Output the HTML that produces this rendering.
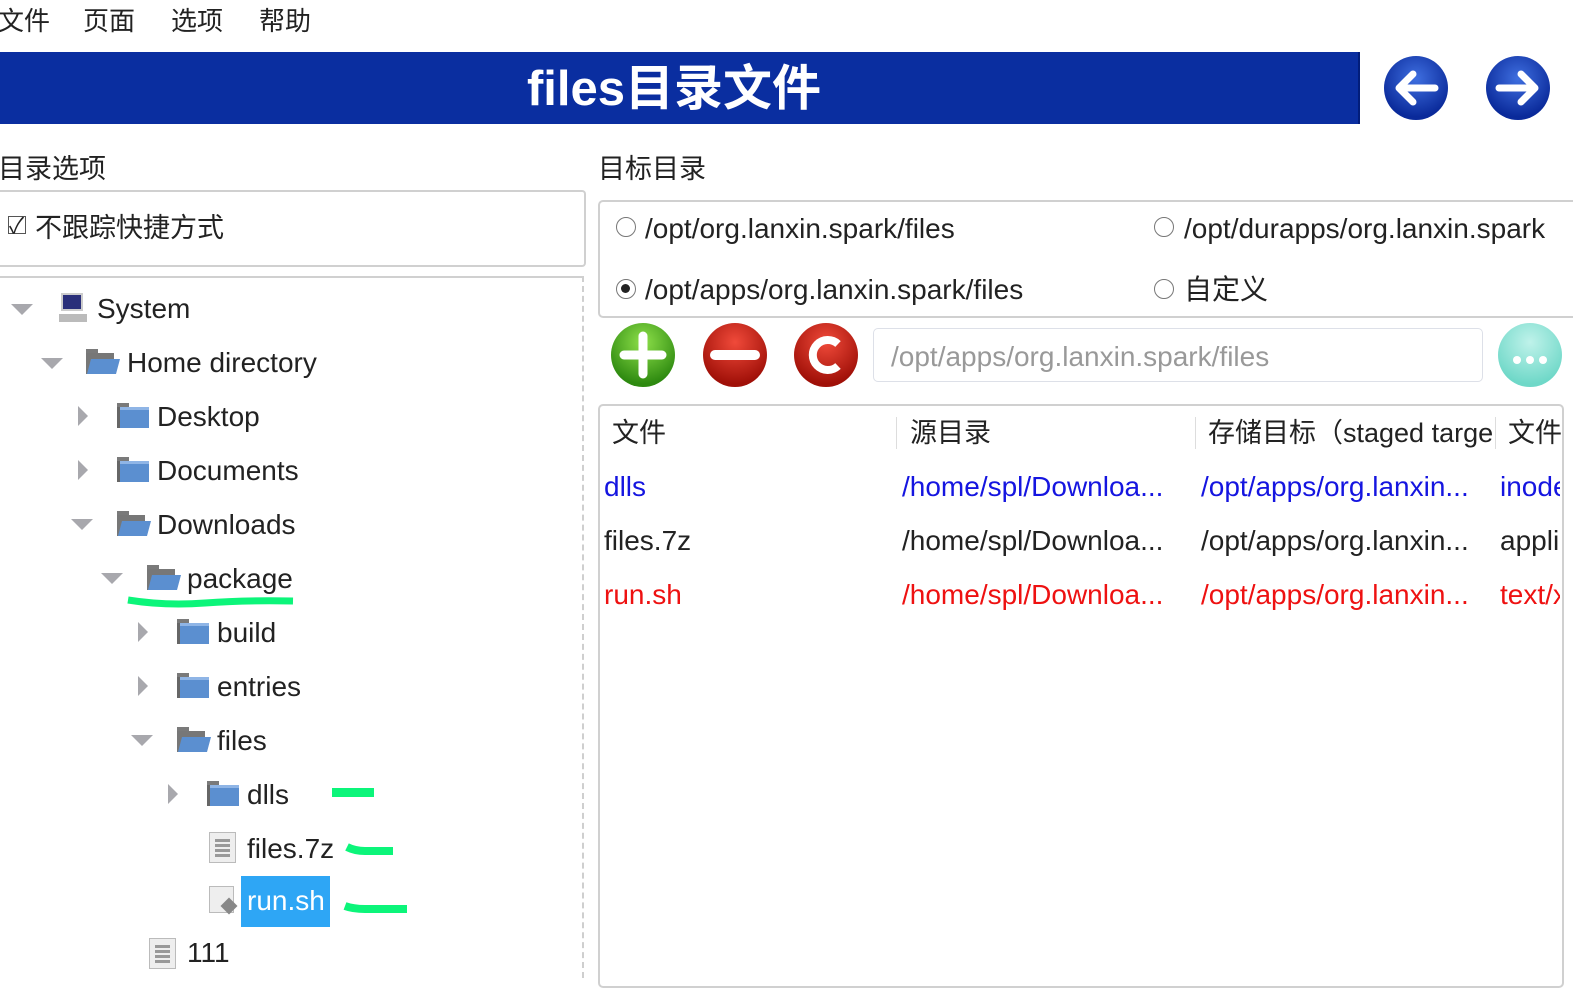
<!DOCTYPE html>
<html><head><meta charset="utf-8"><style>
body{margin:0;width:1573px;height:966px;overflow:hidden;background:#fff;position:relative;font-family:"Liberation Sans","Noto Sans CJK SC",sans-serif;color:#222}
.t{position:absolute;white-space:nowrap;font-size:28px;line-height:34px}
.abs{position:absolute}
.tri-d{position:absolute;width:0;height:0;border-left:11px solid transparent;border-right:11px solid transparent;border-top:11px solid #a8a8ad}
.tri-r{position:absolute;width:0;height:0;border-top:10px solid transparent;border-bottom:10px solid transparent;border-left:10px solid #a8a8ad}
.radio{position:absolute;width:20px;height:20px;border:1.5px solid #777;border-radius:50%;box-sizing:border-box;background:#fff}
</style></head><body>
<svg width="0" height="0" style="position:absolute"><defs>
<g id="fold"><rect x="0" y="1" width="12" height="6" fill="#7a7a7a"/><rect x="0" y="5" width="32" height="21" fill="#5b8fd0"/><rect x="0" y="5" width="32" height="3" fill="#8fb5e6"/><rect x="0" y="5" width="3" height="21" fill="#666"/></g>
<g id="ofold"><rect x="0" y="1" width="12" height="6" fill="#7a7a7a"/><rect x="0" y="5" width="28" height="21" fill="#777"/><polygon points="5,11 34,11 30,26 1,26" fill="#5b8fd0"/></g>
<g id="doc"><rect x="0.5" y="0.5" width="26" height="30" fill="#eee" stroke="#bbb"/><g fill="#999"><rect x="6" y="7" width="15" height="3"/><rect x="6" y="12" width="15" height="3"/><rect x="6" y="17" width="15" height="3"/><rect x="6" y="22" width="15" height="3"/></g></g>
</defs></svg>

<div class="t" style="left:-2px;top:4px;font-size:26px">文件</div>
<div class="t" style="left:83px;top:4px;font-size:26px">页面</div>
<div class="t" style="left:171px;top:4px;font-size:26px">选项</div>
<div class="t" style="left:259px;top:4px;font-size:26px">帮助</div>

<div class="abs" style="left:0;top:52px;width:1358px;height:72px;background:#0a2ea0;border-right:2px solid #021d7a"></div>
<div class="t" style="left:0;top:61px;width:1348px;text-align:center;color:#fff;font-weight:bold;font-size:49px;line-height:56px">files目录文件</div>
<svg class="abs" style="left:1383px;top:55px" width="66" height="66" viewBox="0 0 66 66"><defs><radialGradient id="bg" cx="50%" cy="35%" r="60%"><stop offset="0" stop-color="#3f6fe0"/><stop offset="1" stop-color="#0a2a9a"/></radialGradient></defs><circle cx="33" cy="33" r="32" fill="url(#bg)"/><path d="M52 33H16M30 19L16 33L30 47" stroke="#fff" stroke-width="7" fill="none" stroke-linecap="round" stroke-linejoin="round"/></svg>
<svg class="abs" style="left:1485px;top:55px" width="66" height="66" viewBox="0 0 66 66"><circle cx="33" cy="33" r="32" fill="url(#bg)"/><path d="M14 33H50M36 19L50 33L36 47" stroke="#fff" stroke-width="7" fill="none" stroke-linecap="round" stroke-linejoin="round"/></svg>

<div class="t" style="left:-2px;top:152px;font-size:27px">目录选项</div>
<div class="abs" style="left:-2px;top:190px;width:586px;height:73px;border:2px solid #d0d0d0;border-left:none;border-radius:0 4px 4px 0"></div>
<div class="abs" style="left:8px;top:216px;width:18px;height:18px;border:1.5px solid #555;box-sizing:border-box"></div>
<div class="t" style="left:9px;top:209px;font-size:22px">✓</div>
<div class="t" style="left:35px;top:211px;font-size:27px">不跟踪快捷方式</div>

<div class="abs" style="left:-2px;top:276px;width:584px;height:700px;border-top:2px solid #d0d0d0;border-right:2px dashed #cfcfcf"></div>

<div class="tri-d" style="left:11px;top:304px"></div>
<svg class="abs" style="left:58px;top:292px" width="30" height="32"><rect x="3" y="1" width="22" height="18" fill="#ccc"/><rect x="5" y="3" width="18" height="14" fill="#2a2f7a"/><rect x="1" y="22" width="28" height="8" fill="#bbb"/></svg>
<div class="t" style="left:97px;top:292px">System</div>

<div class="tri-d" style="left:41px;top:358px"></div>
<svg class="abs" style="left:86px;top:348px" width="36" height="28"><use href="#ofold"/></svg>
<div class="t" style="left:127px;top:346px">Home directory</div>

<div class="tri-r" style="left:78px;top:406px"></div>
<svg class="abs" style="left:117px;top:402px" width="36" height="28"><use href="#fold"/></svg>
<div class="t" style="left:157px;top:400px">Desktop</div>

<div class="tri-r" style="left:78px;top:460px"></div>
<svg class="abs" style="left:117px;top:456px" width="36" height="28"><use href="#fold"/></svg>
<div class="t" style="left:157px;top:454px">Documents</div>

<div class="tri-d" style="left:71px;top:519px"></div>
<svg class="abs" style="left:117px;top:510px" width="36" height="28"><use href="#ofold"/></svg>
<div class="t" style="left:157px;top:508px">Downloads</div>

<div class="tri-d" style="left:101px;top:573px"></div>
<svg class="abs" style="left:147px;top:564px" width="36" height="28"><use href="#ofold"/></svg>
<div class="t" style="left:187px;top:562px">package</div>
<svg class="abs" style="left:125px;top:592px" width="175" height="20"><path d="M3 8 Q40 14 80 11 T168 9" stroke="#0cf57a" stroke-width="7" fill="none"/></svg>

<div class="tri-r" style="left:138px;top:622px"></div>
<svg class="abs" style="left:177px;top:618px" width="36" height="28"><use href="#fold"/></svg>
<div class="t" style="left:217px;top:616px">build</div>

<div class="tri-r" style="left:138px;top:676px"></div>
<svg class="abs" style="left:177px;top:672px" width="36" height="28"><use href="#fold"/></svg>
<div class="t" style="left:217px;top:670px">entries</div>

<div class="tri-d" style="left:131px;top:735px"></div>
<svg class="abs" style="left:177px;top:726px" width="36" height="28"><use href="#ofold"/></svg>
<div class="t" style="left:217px;top:724px">files</div>

<div class="tri-r" style="left:168px;top:784px"></div>
<svg class="abs" style="left:207px;top:780px" width="36" height="28"><use href="#fold"/></svg>
<div class="t" style="left:247px;top:778px">dlls</div>
<div class="abs" style="left:332px;top:788px;width:42px;height:9px;background:#0cf57a"></div>

<svg class="abs" style="left:209px;top:832px" width="28" height="32"><use href="#doc"/></svg>
<div class="t" style="left:247px;top:832px">files.7z</div>
<svg class="abs" style="left:345px;top:842px" width="50" height="18"><path d="M2 5 Q10 9 20 9 H48" stroke="#0cf57a" stroke-width="8" fill="none"/></svg>

<svg class="abs" style="left:209px;top:886px" width="32" height="32"><rect x="0.5" y="0.5" width="24" height="26" fill="#eee" stroke="#bbb"/><rect x="14" y="14" width="12" height="12" fill="#888" transform="rotate(45 20 20)"/></svg>
<div class="abs" style="left:241px;top:876px;width:89px;height:51px;background:#2ea6f5"></div>
<div class="t" style="left:247px;top:884px;color:#fff">run.sh</div>
<svg class="abs" style="left:343px;top:898px" width="66" height="18"><path d="M2 8 Q10 11 22 11 H64" stroke="#0cf57a" stroke-width="8" fill="none"/></svg>

<svg class="abs" style="left:149px;top:938px" width="28" height="32"><use href="#doc"/></svg>
<div class="t" style="left:187px;top:936px">111</div>

<div class="t" style="left:598px;top:152px;font-size:27px">目标目录</div>
<div class="abs" style="left:598px;top:200px;width:990px;height:114px;border:2px solid #d0d0d0;border-radius:5px"></div>
<div class="radio" style="left:616px;top:217px"></div>
<div class="t" style="left:645px;top:212px">/opt/org.lanxin.spark/files</div>
<div class="radio" style="left:1154px;top:217px"></div>
<div class="t" style="left:1184px;top:212px">/opt/durapps/org.lanxin.spark</div>
<div class="radio" style="left:616px;top:279px"><div style="margin:4px;width:9px;height:9px;border-radius:50%;background:#222"></div></div>
<div class="t" style="left:645px;top:273px">/opt/apps/org.lanxin.spark/files</div>
<div class="radio" style="left:1154px;top:279px"></div>
<div class="t" style="left:1184px;top:273px">自定义</div>

<svg class="abs" style="left:610px;top:322px" width="66" height="66"><defs><radialGradient id="gg" cx="50%" cy="30%" r="65%"><stop offset="0" stop-color="#8ee04a"/><stop offset="1" stop-color="#2e8a10"/></radialGradient><radialGradient id="rg" cx="50%" cy="30%" r="65%"><stop offset="0" stop-color="#f04a3a"/><stop offset="1" stop-color="#a01008"/></radialGradient><radialGradient id="tg" cx="50%" cy="30%" r="65%"><stop offset="0" stop-color="#bff2ea"/><stop offset="1" stop-color="#6fd8c8"/></radialGradient></defs><circle cx="33" cy="33" r="32" fill="url(#gg)"/><path d="M33 14V52M14 33H52" stroke="#fff" stroke-width="9" stroke-linecap="round"/></svg>
<svg class="abs" style="left:702px;top:322px" width="66" height="66"><circle cx="33" cy="33" r="32" fill="url(#rg)"/><path d="M13 33H53" stroke="#fff" stroke-width="10" stroke-linecap="round"/></svg>
<svg class="abs" style="left:793px;top:322px" width="66" height="66"><circle cx="33" cy="33" r="32" fill="url(#rg)"/><path d="M45 22A15 15 0 1 0 45 44" stroke="#fff" stroke-width="8" fill="none"/></svg>
<div class="abs" style="left:873px;top:328px;width:608px;height:52px;border:1.5px solid #dde0e8;border-radius:5px"></div>
<div class="t" style="left:891px;top:340px;color:#999">/opt/apps/org.lanxin.spark/files</div>
<svg class="abs" style="left:1497px;top:322px" width="76" height="66"><circle cx="33" cy="33" r="32" fill="url(#tg)"/><circle cx="20" cy="38" r="4" fill="#fff"/><circle cx="33" cy="38" r="4" fill="#fff"/><circle cx="46" cy="38" r="4" fill="#fff"/></svg>

<div class="abs" style="left:598px;top:404px;width:962px;height:580px;border:2px solid #d0d0d0;border-radius:5px"></div>
<div class="abs" style="left:896px;top:417px;width:1px;height:32px;background:#ddd"></div>
<div class="abs" style="left:1195px;top:417px;width:1px;height:32px;background:#ddd"></div>
<div class="abs" style="left:1495px;top:417px;width:1px;height:32px;background:#ddd"></div>
<div class="t" style="left:612px;top:416px;font-size:27px">文件</div>
<div class="t" style="left:910px;top:416px;font-size:27px">源目录</div>
<div class="t" style="left:1208px;top:416px;font-size:27px;width:287px;overflow:hidden">存储目标（staged targe</div>
<div class="t" style="left:1508px;top:416px;font-size:27px">文件</div>

<div style="position:absolute;left:0;top:0;width:1560px;height:966px;overflow:hidden">
<div class="t" style="left:604px;top:470px;color:#1515e0">dlls</div>
<div class="t" style="left:902px;top:470px;color:#1515e0">/home/spl/Downloa...</div>
<div class="t" style="left:1201px;top:470px;color:#1515e0">/opt/apps/org.lanxin...</div>
<div class="t" style="left:1500px;top:470px;color:#1515e0">inode</div>
<div class="t" style="left:604px;top:524px">files.7z</div>
<div class="t" style="left:902px;top:524px">/home/spl/Downloa...</div>
<div class="t" style="left:1201px;top:524px">/opt/apps/org.lanxin...</div>
<div class="t" style="left:1500px;top:524px">appli</div>
<div class="t" style="left:604px;top:578px;color:#ee1111">run.sh</div>
<div class="t" style="left:902px;top:578px;color:#ee1111">/home/spl/Downloa...</div>
<div class="t" style="left:1201px;top:578px;color:#ee1111">/opt/apps/org.lanxin...</div>
<div class="t" style="left:1500px;top:578px;color:#ee1111">text/x</div>
</div>
</body></html>
